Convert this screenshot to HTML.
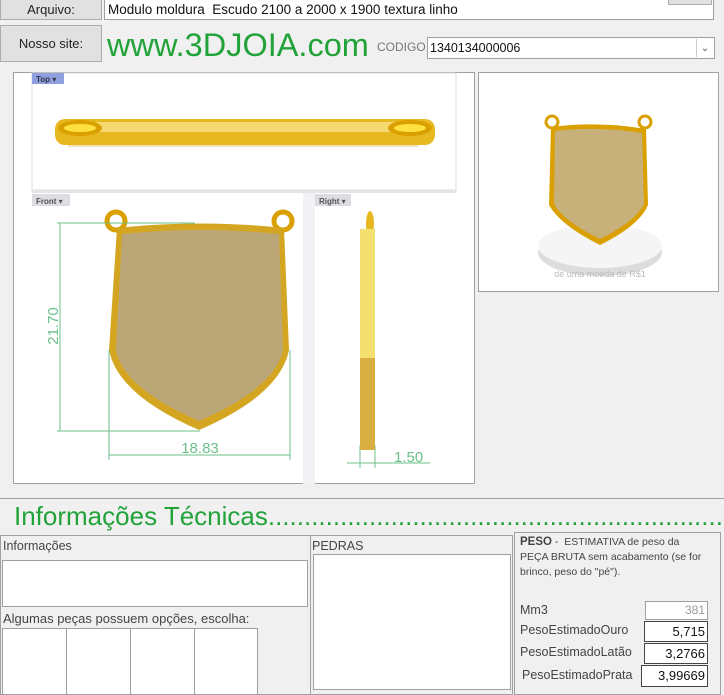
<!DOCTYPE html>
<html><head><meta charset="utf-8"><style>
body{margin:0;width:724px;height:695px;background:#f0f0f0;position:relative;overflow:hidden;font-family:"Liberation Sans","DejaVu Sans",sans-serif;}
.a{position:absolute;box-sizing:border-box;}
.btn{background:#e1e1e1;border:1px solid #adadad;font-size:13px;color:#222;text-align:center;}
.tb{background:#fff;border:1px solid #a0a0a0;font-size:13px;color:#111;}
.lbl{font-size:12.5px;color:#444;}
</style></head><body>
<div class="a btn" style="left:0;top:-2px;width:102px;height:22px;line-height:22px;">Arquivo:</div>
<div class="a tb" style="left:104px;top:-2px;width:610px;height:22px;line-height:22px;padding-left:3px;font-size:13.5px;">Modulo moldura&nbsp; Escudo 2100 a 2000 x 1900 textura linho</div>
<div class="a btn" style="left:668px;top:-2px;width:44px;height:7px;"></div>
<div class="a btn" style="left:0;top:25px;width:102px;height:37px;line-height:35px;">Nosso site:</div>
<div class="a" style="left:107px;top:25px;font-size:32.5px;color:#22a33a;line-height:40px;">www.3DJOIA.com</div>
<div class="a" style="left:377px;top:40px;font-size:12px;color:#777;">CODIGO</div>
<div class="a tb" style="left:427px;top:37px;width:288px;height:22px;line-height:20px;padding-left:2px;font-size:12.5px;">1340134000006<span style="position:absolute;right:1px;top:1px;width:16px;height:18px;border-left:1px solid #ccc;font-size:10px;text-align:center;color:#555;">&#8964;</span></div>

<div class="a" style="left:13px;top:72px;width:462px;height:412px;border:1px solid #a0a0a0;background:#fff;"></div>
<svg class="a" style="left:13px;top:72px" width="462" height="412" viewBox="13 72 462 412">
<rect x="32" y="73" width="424" height="117" fill="#fff" stroke="#ddd"/>
<rect x="32" y="190" width="424" height="3" fill="#e2e4ea"/>
<rect x="303" y="193" width="12" height="291" fill="#f2f2f4"/>
<rect x="32" y="73" width="32" height="11" fill="#8fa0e0"/>
<text x="36" y="82" font-size="8" font-weight="bold" fill="#334">Top ▾</text>
<rect x="32" y="194" width="38" height="12" fill="#dcdde2"/>
<text x="36" y="204" font-size="8" font-weight="bold" fill="#555">Front ▾</text>
<rect x="315" y="194" width="36" height="12" fill="#dcdde2"/>
<text x="319" y="204" font-size="8" font-weight="bold" fill="#555">Right ▾</text>
<rect x="68" y="137" width="350" height="10" fill="#eee0b8"/>
<rect x="55" y="119" width="380" height="26" rx="10" fill="#e8b820"/>
<rect x="80" y="122" width="320" height="10" fill="#f4d870"/>
<ellipse cx="80" cy="128" rx="22" ry="8" fill="#d9a000"/><ellipse cx="80" cy="128" rx="16" ry="4" fill="#ffe040"/>
<ellipse cx="410" cy="128" rx="22" ry="8" fill="#d9a000"/><ellipse cx="410" cy="128" rx="16" ry="4" fill="#ffe040"/>
<circle cx="116" cy="221" r="9" fill="none" stroke="#d9a000" stroke-width="5"/>
<circle cx="283" cy="221" r="9" fill="none" stroke="#d9a000" stroke-width="5"/>
<path d="M117 228 Q200 219 284 228 L289 350 Q280 395 199 430 Q118 395 109 350 Z" fill="#d4a520"/>
<path d="M122 234 Q200 226 279 234 L283 350 Q275 388 199 421 Q123 388 116 350 Z" fill="#bba677"/>
<g stroke="#6cc08a" stroke-width="1" fill="#6cc08a">
<line x1="60" y1="223" x2="60" y2="431"/><line x1="57" y1="223" x2="195" y2="223"/><line x1="57" y1="431" x2="200" y2="431"/>
<line x1="109" y1="350" x2="109" y2="460"/><line x1="290" y1="350" x2="290" y2="460"/><line x1="109" y1="455" x2="290" y2="455"/>
<line x1="360" y1="445" x2="360" y2="468"/><line x1="375" y1="445" x2="375" y2="468"/><line x1="347" y1="463" x2="430" y2="463"/>
</g>
<text x="200" y="453" font-size="15" fill="#6cc08a" text-anchor="middle">18.83</text>
<text transform="translate(58,326) rotate(-90)" font-size="15" fill="#6cc08a" text-anchor="middle">21.70</text>
<text x="394" y="462" font-size="15" fill="#6cc08a">1.50</text>
<ellipse cx="370" cy="224" rx="4" ry="13" fill="#e8b820"/>
<rect x="360" y="229" width="15" height="130" fill="#f3e070"/>
<rect x="360" y="358" width="15" height="92" fill="#d8ae40"/>
</svg>

<div class="a" style="left:478px;top:72px;width:241px;height:220px;border:1px solid #a0a0a0;background:#fff;"></div>
<svg class="a" style="left:478px;top:72px" width="241" height="220" viewBox="478 72 241 220">
<ellipse cx="600" cy="252" rx="62" ry="24" fill="#dcdcdc"/>
<ellipse cx="600" cy="246" rx="62" ry="22" fill="#f5f5f5"/>
<text x="600" y="277" font-size="9" fill="#bbb" text-anchor="middle">de uma moeda de R$1</text>
<circle cx="552" cy="122" r="6" fill="none" stroke="#d9a000" stroke-width="3"/>
<circle cx="645" cy="122" r="6" fill="none" stroke="#d9a000" stroke-width="3"/>
<path d="M551 127 Q598 121 646 129 L648 205 Q640 225 600 245 Q560 225 549 205 Z" fill="#d9a000"/>
<path d="M555 131 Q598 126 642 133 L644 204 Q636 221 600 239 Q563 221 554 204 Z" fill="#c8b07a"/>
</svg>

<div class="a" style="left:0;top:498px;width:724px;height:1px;background:#a0a0a0;"></div>
<div class="a" style="left:14px;top:501px;font-size:26px;color:#22a33a;white-space:nowrap;width:710px;overflow:hidden;">Informações Técnicas.........................................................................</div>

<div class="a" style="left:0;top:535px;width:311px;height:160px;border:1px solid #a0a0a0;"></div>
<div class="a lbl" style="left:3px;top:539px;">Informações</div>
<div class="a tb" style="left:2px;top:560px;width:306px;height:47px;"></div>
<div class="a lbl" style="left:3px;top:611px;font-size:13px;">Algumas peças possuem opções, escolha:</div>
<div class="a" style="left:2px;top:628px;width:256px;height:67px;background:#fff;border:1px solid #a0a0a0;"></div>
<div class="a" style="left:66px;top:628px;width:1px;height:67px;background:#a0a0a0;"></div>
<div class="a" style="left:130px;top:628px;width:1px;height:67px;background:#a0a0a0;"></div>
<div class="a" style="left:194px;top:628px;width:1px;height:67px;background:#a0a0a0;"></div>

<div class="a" style="left:310px;top:535px;width:203px;height:160px;border:1px solid #a0a0a0;"></div>
<div class="a lbl" style="left:312px;top:539px;">PEDRAS</div>
<div class="a tb" style="left:313px;top:554px;width:198px;height:136px;"></div>

<div class="a" style="left:514px;top:532px;width:207px;height:163px;border:1px solid #a0a0a0;"></div>
<div class="a" style="left:520px;top:535px;width:190px;font-size:10.5px;color:#444;line-height:15px;"><b style="font-size:11.5px;">PESO</b> - &nbsp;ESTIMATIVA de peso da PEÇA BRUTA sem acabamento (se for brinco, peso do "pé").</div>
<div class="a lbl" style="left:520px;top:603px;">Mm3</div>
<div class="a tb" style="left:645px;top:601px;width:63px;height:19px;text-align:right;padding-right:2px;color:#999;font-size:12px;line-height:17px;">381</div>
<div class="a lbl" style="left:520px;top:623px;">PesoEstimadoOuro</div>
<div class="a tb" style="left:644px;top:621px;width:64px;height:21px;text-align:right;padding-right:2px;border-color:#444;line-height:19px;">5,715</div>
<div class="a lbl" style="left:520px;top:645px;">PesoEstimadoLatão</div>
<div class="a tb" style="left:644px;top:643px;width:64px;height:21px;text-align:right;padding-right:2px;border-color:#444;line-height:19px;">3,2766</div>
<div class="a lbl" style="left:522px;top:668px;">PesoEstimadoPrata</div>
<div class="a tb" style="left:641px;top:665px;width:67px;height:22px;text-align:right;padding-right:2px;border-color:#444;line-height:20px;">3,99669</div>
</body></html>
